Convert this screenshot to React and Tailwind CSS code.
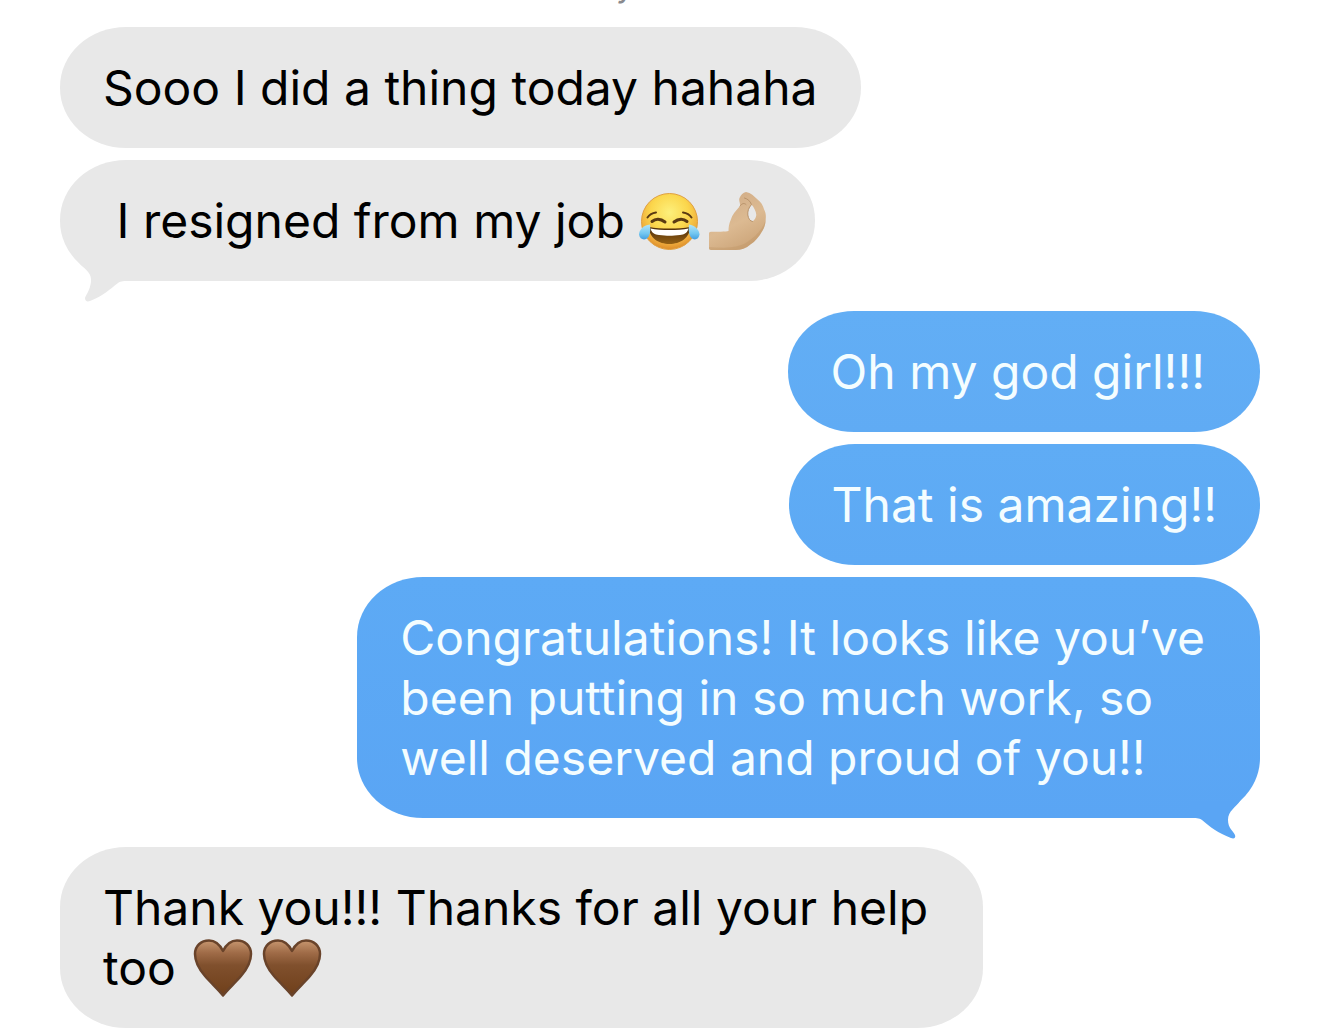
function JoyEmoji() {
  return (
    <svg viewBox="0 0 62 60" className="inline-block h-[60px] w-[62px] shrink-0" role="img" aria-label="Face with tears of joy">
      <defs>
        <radialGradient id="joyFace" cx="50%" cy="34%" r="68%">
          <stop offset="0" stopColor="#fdf07c" />
          <stop offset="0.5" stopColor="#fbd64c" />
          <stop offset="0.82" stopColor="#eeaa3c" />
          <stop offset="1" stopColor="#d98626" />
        </radialGradient>
        <linearGradient id="joyMouth" x1="0" y1="0" x2="0" y2="1">
          <stop offset="0" stopColor="#4d2c0a" />
          <stop offset="1" stopColor="#946014" />
        </linearGradient>
        <linearGradient id="joyTear" x1="0" y1="0" x2="0" y2="1">
          <stop offset="0" stopColor="#b4e6f8" />
          <stop offset="0.6" stopColor="#72c6f0" />
          <stop offset="1" stopColor="#439fe0" />
        </linearGradient>
      </defs>
      <circle cx="31.500" cy="30.500" r="28" fill="url(#joyFace)" stroke="#e0a040" strokeWidth="1" />
      <path d="M11 36C22 38 41 38 52 36C52 47 42 53 31.500 53C21 53 11 47 11 36Z" fill="url(#joyMouth)" />
      <path d="M12.500 37.500C23 39.500 40 39.500 50.500 37.500C49.500 42 46 43.500 42 44C34 45 29 45 21 44C17 43.500 13.500 42 12.500 37.500Z" fill="#fff" />
      <g fill="none" stroke="#5a3a12" strokeLinecap="round">
        <path d="M9.500 26.500C11.500 23.500 14.500 22 18 21.500" strokeWidth="2" />
        <path d="M53.500 26.500C51.500 23.500 48.500 22 45 21.500" strokeWidth="2" />
        <path d="M14 30.500C17.500 27.500 22.500 27.500 27 31" strokeWidth="3" />
        <path d="M36 31C40.500 27.500 45.500 27.500 49 30.500" strokeWidth="3" />
      </g>
      <path d="M12 33.500C5 34 1 39.500 1 43.500C1.500 48.500 7 50 10 46.500C12.500 43.500 12.500 38 12 33.500Z" fill="url(#joyTear)" />
      <path d="M51 33.500C57 34 61.500 39.500 61.500 43.500C61 48.500 56 50 53 46.500C50.500 43.500 50.500 38 51 33.500Z" fill="url(#joyTear)" />
    </svg>
  );
}

function PinchedFingersEmoji() {
  return (
    <svg viewBox="0 0 60 60" className="inline-block h-[60px] w-[60px] shrink-0" role="img" aria-label="Pinched fingers">
      <defs>
        <linearGradient id="hand" x1="0.200" y1="0" x2="0.700" y2="1">
          <stop offset="0" stopColor="#d0ab85" />
          <stop offset="0.550" stopColor="#dcba92" />
          <stop offset="1" stopColor="#cba377" />
        </linearGradient>
      </defs>
      <path
        fillRule="evenodd"
        d="M3 40.700C9 40.700 15 41 20.500 40C20.500 36 21 33 22.700 29C24 24 28 19.500 32 15C32.500 12 30.500 10 31.500 7C33 4 35 1.500 38 1C43 2 46 5 49.300 8.300C53 11 55 14.500 56 18.300C58 22 58 25 57.700 28.300C57.500 33 56.500 37 54.300 40C51 46 47 50.500 42.700 53.300C38 57.500 33 59 27.700 59L3 59C1.500 59 1 58 1 57L1 43C1 41.500 1.500 40.700 3 40.700ZM43.500 13.500C40.500 17 39.500 20 39.800 24C40.500 28 42 30 44.500 30.500C46.500 29 48 27 48.300 24C48 20 46 16.500 43.500 13.500Z"
        fill="url(#hand)"
      />
      <path d="M36.500 7C40 8 42 10 43.500 13.500C40.500 17 39.500 20 39.800 24C40.500 28 42 30 44.500 30.500M32 15C34 12.500 36 11.500 38 13.500" fill="none" stroke="#b8926a" strokeWidth="1" strokeLinecap="round" />
      <path d="M57.700 28.300C57.500 33 56.500 37 54.300 40C51 46 47 50.500 42.700 53.300C38 57.500 33 59 27.700 59L3 59C1.500 59 1 58 1 56C16 57 32 58 42 49C50 43 56 36 57.700 28.300Z" fill="#b98d5d" opacity="0.300" />
    </svg>
  );
}

function BrownHeart() {
  return (
    <svg viewBox="0 0 60 60" className="inline-block h-[60px] w-[60px] shrink-0" role="img" aria-label="Brown heart">
      <defs>
        <linearGradient id="heart" x1="0" y1="0" x2="0" y2="1">
          <stop offset="0" stopColor="#c7966f" />
          <stop offset="0.220" stopColor="#a06c48" />
          <stop offset="0.450" stopColor="#80502d" />
          <stop offset="1" stopColor="#6f3f1a" />
        </linearGradient>
      </defs>
      <path
        d="M30 57.500C26 52 19 46 12 38C6 31 2 24 2 16C2 8 8 2.500 16 2.500C23 2.500 27 7 30 13C33 7 37 2.500 44 2.500C52 2.500 58 8 58 16C58 24 54 31 48 38C41 46 34 52 30 57.500Z"
        fill="url(#heart)"
        stroke="#69432a"
        strokeWidth="2.500"
        strokeLinejoin="round"
      />
    </svg>
  );
}

function Tail({ side }) {
  if (side === "left") {
    return (
      <svg viewBox="0 0 70 50" className="absolute -bottom-[21px] left-0 h-[50px] w-[70px]" aria-hidden="true">
        <path d="M20 12C26 18 32 21 31 30C30 38 26 43 25 46C25 49 27 50 30 49C43 44 50 37 58 31C61 29 64 29 70 29L70 12Z" fill="#e8e8e8" />
      </svg>
    );
  }
  return (
    <svg viewBox="0 0 70 50" className="absolute right-0 -bottom-[21px] h-[50px] w-[70px]" aria-hidden="true">
      <path d="M50 12C46 18 38 22 38 31C38 39 43 42 45 46C46 49 44 50 41 49C28 44 20 38 12 31C9 29 6 29 0 29L0 12Z" fill="#5aa5f4" />
    </svg>
  );
}

function Bubble({ from, tail, className = "", children }) {
  const look = from === "them" ? "self-start bg-[#e8e8e8] text-black" : "self-end text-[#f4fdff]";
  return (
    <li className={`relative max-w-full rounded-[66px/60px] px-[43px] pt-[31px] pb-[30px] text-[48px] leading-[60px] ${look} ${className}`}>
      {tail && <Tail side={from === "them" ? "left" : "right"} />}
      <div className="relative">{children}</div>
    </li>
  );
}

export default function App() {
  return (
    <main className="min-h-screen bg-white font-['Inter',sans-serif]">
      <div className="relative h-[27px] overflow-hidden">
        <span aria-hidden="true" className="absolute -top-[34px] left-[616px] text-[32px] leading-[40px] text-[#8a8a8e]">y</span>
      </div>
      <ul className="flex flex-col px-[60px] pb-2">
        <Bubble from="them">Sooo I did a thing today hahaha</Bubble>
        <Bubble from="them" tail className="mt-3">
          <p className="flex items-center whitespace-pre">
            {" I resigned from my job "}
            <span className="flex gap-2 pr-1">
              <JoyEmoji />
              <PinchedFingersEmoji />
            </span>
          </p>
        </Bubble>
        <Bubble from="me" className="mt-[30px] bg-linear-to-b from-[#62aef5] to-[#60abf4]">
          <p className="pr-3">Oh my god girl!!!</p>
        </Bubble>
        <Bubble from="me" className="mt-3 bg-linear-to-b from-[#5facf5] to-[#5da9f4]">That is amazing!!</Bubble>
        <Bubble from="me" tail className="mt-3 bg-linear-to-b from-[#5daaf5] to-[#5aa5f4]">
          <p className="pr-3">
            Congratulations! It looks like you’ve<br />been putting in so much work, so<br />well deserved and proud of you!!
          </p>
        </Bubble>
        <Bubble from="them" className="mt-[29px]">
          <p className="pr-3">Thank you!!! Thanks for all your help</p>
          <p className="flex items-center whitespace-pre">
            {"too "}
            <span className="ml-1 flex gap-[9px]">
              <BrownHeart />
              <BrownHeart />
            </span>
          </p>
        </Bubble>
      </ul>
    </main>
  );
}
